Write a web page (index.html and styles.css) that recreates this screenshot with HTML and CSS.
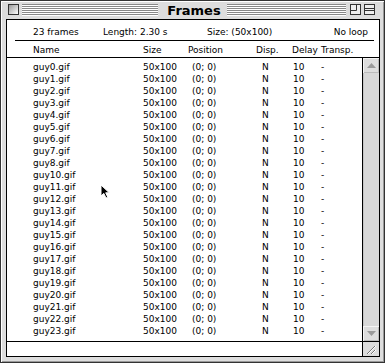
FILE: index.html
```html
<!DOCTYPE html>
<html>
<head>
<meta charset="utf-8">
<title>Frames</title>
<link rel="stylesheet" href="styles.css">
</head>
<body>
<div class="window">
  <div class="titlebar">
    <div class="side left">
      <span class="closebox"></span>
      <span class="stripes"></span>
    </div>
    <div class="title">Frames</div>
    <div class="side right">
      <span class="stripes"></span>
      <svg class="winbox zoombox" width="11" height="11" viewBox="0 0 11 11">
        <rect x="0.5" y="0.5" width="10" height="10" fill="#eeeeee" stroke="#333"/>
        <path d="M0.5 6.5 H6.5 V0.5" fill="none" stroke="#333"/>
      </svg>
      <svg class="winbox collapsebox" width="11" height="11" viewBox="0 0 11 11">
        <rect x="0.5" y="0.5" width="10" height="10" fill="#eeeeee" stroke="#333"/>
        <path d="M0.5 4.5 H10.5 M0.5 6.5 H10.5" fill="none" stroke="#333"/>
      </svg>
    </div>
  </div>

  <div class="content">
    <div class="info">
      <span class="count">23 frames</span>
      <span class="length">Length: 2.30 s</span>
      <span class="size">Size: (50x100)</span>
      <span class="loop">No loop</span>
    </div>

    <div class="row colhead">
      <span>Name</span>
      <span>Size</span>
      <span>Position</span>
      <span>Disp.</span>
      <span>Delay</span>
      <span>Transp.</span>
    </div>

    <div class="body">
      <div class="list">
        <div class="row"><span>guy0.gif</span><span>50x100</span><span class="pos">(0; 0)</span><span class="disp">N</span><span class="delay">10</span><span>-</span></div>
        <div class="row"><span>guy1.gif</span><span>50x100</span><span class="pos">(0; 0)</span><span class="disp">N</span><span class="delay">10</span><span>-</span></div>
        <div class="row"><span>guy2.gif</span><span>50x100</span><span class="pos">(0; 0)</span><span class="disp">N</span><span class="delay">10</span><span>-</span></div>
        <div class="row"><span>guy3.gif</span><span>50x100</span><span class="pos">(0; 0)</span><span class="disp">N</span><span class="delay">10</span><span>-</span></div>
        <div class="row"><span>guy4.gif</span><span>50x100</span><span class="pos">(0; 0)</span><span class="disp">N</span><span class="delay">10</span><span>-</span></div>
        <div class="row"><span>guy5.gif</span><span>50x100</span><span class="pos">(0; 0)</span><span class="disp">N</span><span class="delay">10</span><span>-</span></div>
        <div class="row"><span>guy6.gif</span><span>50x100</span><span class="pos">(0; 0)</span><span class="disp">N</span><span class="delay">10</span><span>-</span></div>
        <div class="row"><span>guy7.gif</span><span>50x100</span><span class="pos">(0; 0)</span><span class="disp">N</span><span class="delay">10</span><span>-</span></div>
        <div class="row"><span>guy8.gif</span><span>50x100</span><span class="pos">(0; 0)</span><span class="disp">N</span><span class="delay">10</span><span>-</span></div>
        <div class="row"><span>guy10.gif</span><span>50x100</span><span class="pos">(0; 0)</span><span class="disp">N</span><span class="delay">10</span><span>-</span></div>
        <div class="row"><span>guy11.gif</span><span>50x100</span><span class="pos">(0; 0)</span><span class="disp">N</span><span class="delay">10</span><span>-</span></div>
        <div class="row"><span>guy12.gif</span><span>50x100</span><span class="pos">(0; 0)</span><span class="disp">N</span><span class="delay">10</span><span>-</span></div>
        <div class="row"><span>guy13.gif</span><span>50x100</span><span class="pos">(0; 0)</span><span class="disp">N</span><span class="delay">10</span><span>-</span></div>
        <div class="row"><span>guy14.gif</span><span>50x100</span><span class="pos">(0; 0)</span><span class="disp">N</span><span class="delay">10</span><span>-</span></div>
        <div class="row"><span>guy15.gif</span><span>50x100</span><span class="pos">(0; 0)</span><span class="disp">N</span><span class="delay">10</span><span>-</span></div>
        <div class="row"><span>guy16.gif</span><span>50x100</span><span class="pos">(0; 0)</span><span class="disp">N</span><span class="delay">10</span><span>-</span></div>
        <div class="row"><span>guy17.gif</span><span>50x100</span><span class="pos">(0; 0)</span><span class="disp">N</span><span class="delay">10</span><span>-</span></div>
        <div class="row"><span>guy18.gif</span><span>50x100</span><span class="pos">(0; 0)</span><span class="disp">N</span><span class="delay">10</span><span>-</span></div>
        <div class="row"><span>guy19.gif</span><span>50x100</span><span class="pos">(0; 0)</span><span class="disp">N</span><span class="delay">10</span><span>-</span></div>
        <div class="row"><span>guy20.gif</span><span>50x100</span><span class="pos">(0; 0)</span><span class="disp">N</span><span class="delay">10</span><span>-</span></div>
        <div class="row"><span>guy21.gif</span><span>50x100</span><span class="pos">(0; 0)</span><span class="disp">N</span><span class="delay">10</span><span>-</span></div>
        <div class="row"><span>guy22.gif</span><span>50x100</span><span class="pos">(0; 0)</span><span class="disp">N</span><span class="delay">10</span><span>-</span></div>
        <div class="row"><span>guy23.gif</span><span>50x100</span><span class="pos">(0; 0)</span><span class="disp">N</span><span class="delay">10</span><span>-</span></div>
      </div>

      <div class="scrollbar">
        <div class="arrow up">
          <svg width="9" height="5" viewBox="0 0 9 5"><path d="M4.5 0 L9 5 H0 Z" fill="#9a9a9a"/></svg>
        </div>
        <div class="track"></div>
        <div class="arrow down">
          <svg width="9" height="5" viewBox="0 0 9 5"><path d="M0 0 H9 L4.5 5 Z" fill="#9a9a9a"/></svg>
        </div>
      </div>
    </div>

    <div class="footer">
      <div class="status"></div>
      <div class="grow">
        <svg width="16" height="14" viewBox="0 0 16 14">
          <path d="M4 12 L12 4 M8 12 L12 8" stroke="#777" fill="none"/>
          <path d="M5 12 L13 4 M9 12 L13 8" stroke="#fff" fill="none"/>
        </svg>
      </div>
    </div>
  </div>

  <!-- mouse pointer sitting over the list -->
  <svg class="cursor" width="12" height="16" viewBox="0 0 12 16">
    <path d="M1 1 L1 12 L3.8 9.4 L6 14 L7.8 13.2 L5.7 8.8 L9.3 8.8 Z" fill="#000" stroke="#fff" stroke-width="1"/>
  </svg>
</div>
</body>
</html>
```

FILE: styles.css
```css
body {
  margin: 0;
  font-family: "DejaVu Sans", Verdana, sans-serif;
  font-size: 9px;
  color: #000;
  background: #dddddd;
}

.window {
  position: relative;
  width: 385px;
  height: 363px;
  box-sizing: border-box;
  border: 1px solid #333;
  background: #dddddd;
  box-shadow: inset 1px 1px #fff, inset -1px -1px #999;
  display: flex;
  flex-direction: column;
}

/* title bar */
.titlebar {
  height: 18px;
  display: grid;
  grid-template-columns: 1fr auto 1fr;
}

.side {
  display: flex;
  height: 18px;
}

.closebox {
  width: 11px;
  height: 11px;
  box-sizing: border-box;
  margin: 3px 0 0 7px;
  border: 1px solid #333;
  background: linear-gradient(135deg, #9a9a9a, #ffffff);
}

.stripes {
  flex: 1;
  height: 12px;
  margin-top: 3px;
  background: repeating-linear-gradient(to bottom, #888 0 1px, #fff 1px 2px);
}

.left .stripes {
  margin-left: 3px;
}

.right .stripes {
  margin-right: 4px;
}

.title {
  font-weight: bold;
  font-size: 13px;
  line-height: 16px;
  padding: 2px 6px 0 9px;
}

.winbox {
  display: block;
  margin-top: 3px;
}

.collapsebox {
  margin-left: 3px;
  margin-right: 9px;
}

/* content area */
.content {
  flex: 1;
  margin: 0 4px 5px 5px;
  border: 1px solid #000;
  background: #fff;
  display: flex;
  flex-direction: column;
}

.info {
  display: flex;
  margin: 0 5px 0 8px;
  padding: 6px 6px 2px 18px;
  line-height: 12px;
  border-bottom: 1px solid #000;
  white-space: nowrap;
}

.count {
  width: 70px;
}

.length {
  width: 104px;
}

.size {
  flex: 1;
}

.row {
  display: grid;
  grid-template-columns: 110px 45px 68px 36px 29px 1fr;
  padding-left: 26px;
  line-height: 12px;
  white-space: nowrap;
}

.colhead {
  padding-top: 3px;
  padding-bottom: 1px;
  border-bottom: 1px solid #000;
}

.pos {
  padding-left: 4px;
}

.disp {
  padding-left: 6px;
}

.delay {
  padding-left: 1px;
}

.body {
  flex: 1;
  display: flex;
}

.list {
  flex: 1;
  padding-top: 3px;
}

.scrollbar {
  width: 16px;
  border-left: 1px solid #000;
  background: #dddddd;
  display: flex;
  flex-direction: column;
}

.arrow {
  height: 15px;
  display: flex;
  align-items: center;
  justify-content: center;
  box-shadow: inset 1px 1px #f4f4f4, inset -1px -1px #bbb;
}

.arrow svg {
  display: block;
}

.track {
  flex: 1;
  background: #d8d8d8;
  box-shadow: inset 1px 0 #c4c4c4;
}

.footer {
  height: 14px;
  border-top: 1px solid #000;
  display: flex;
}

.status {
  flex: 1;
}

.grow {
  width: 16px;
  border-left: 1px solid #000;
  background: #dddddd;
}

.grow svg {
  display: block;
}

.cursor {
  position: absolute;
  left: 99px;
  top: 183px;
}
```
